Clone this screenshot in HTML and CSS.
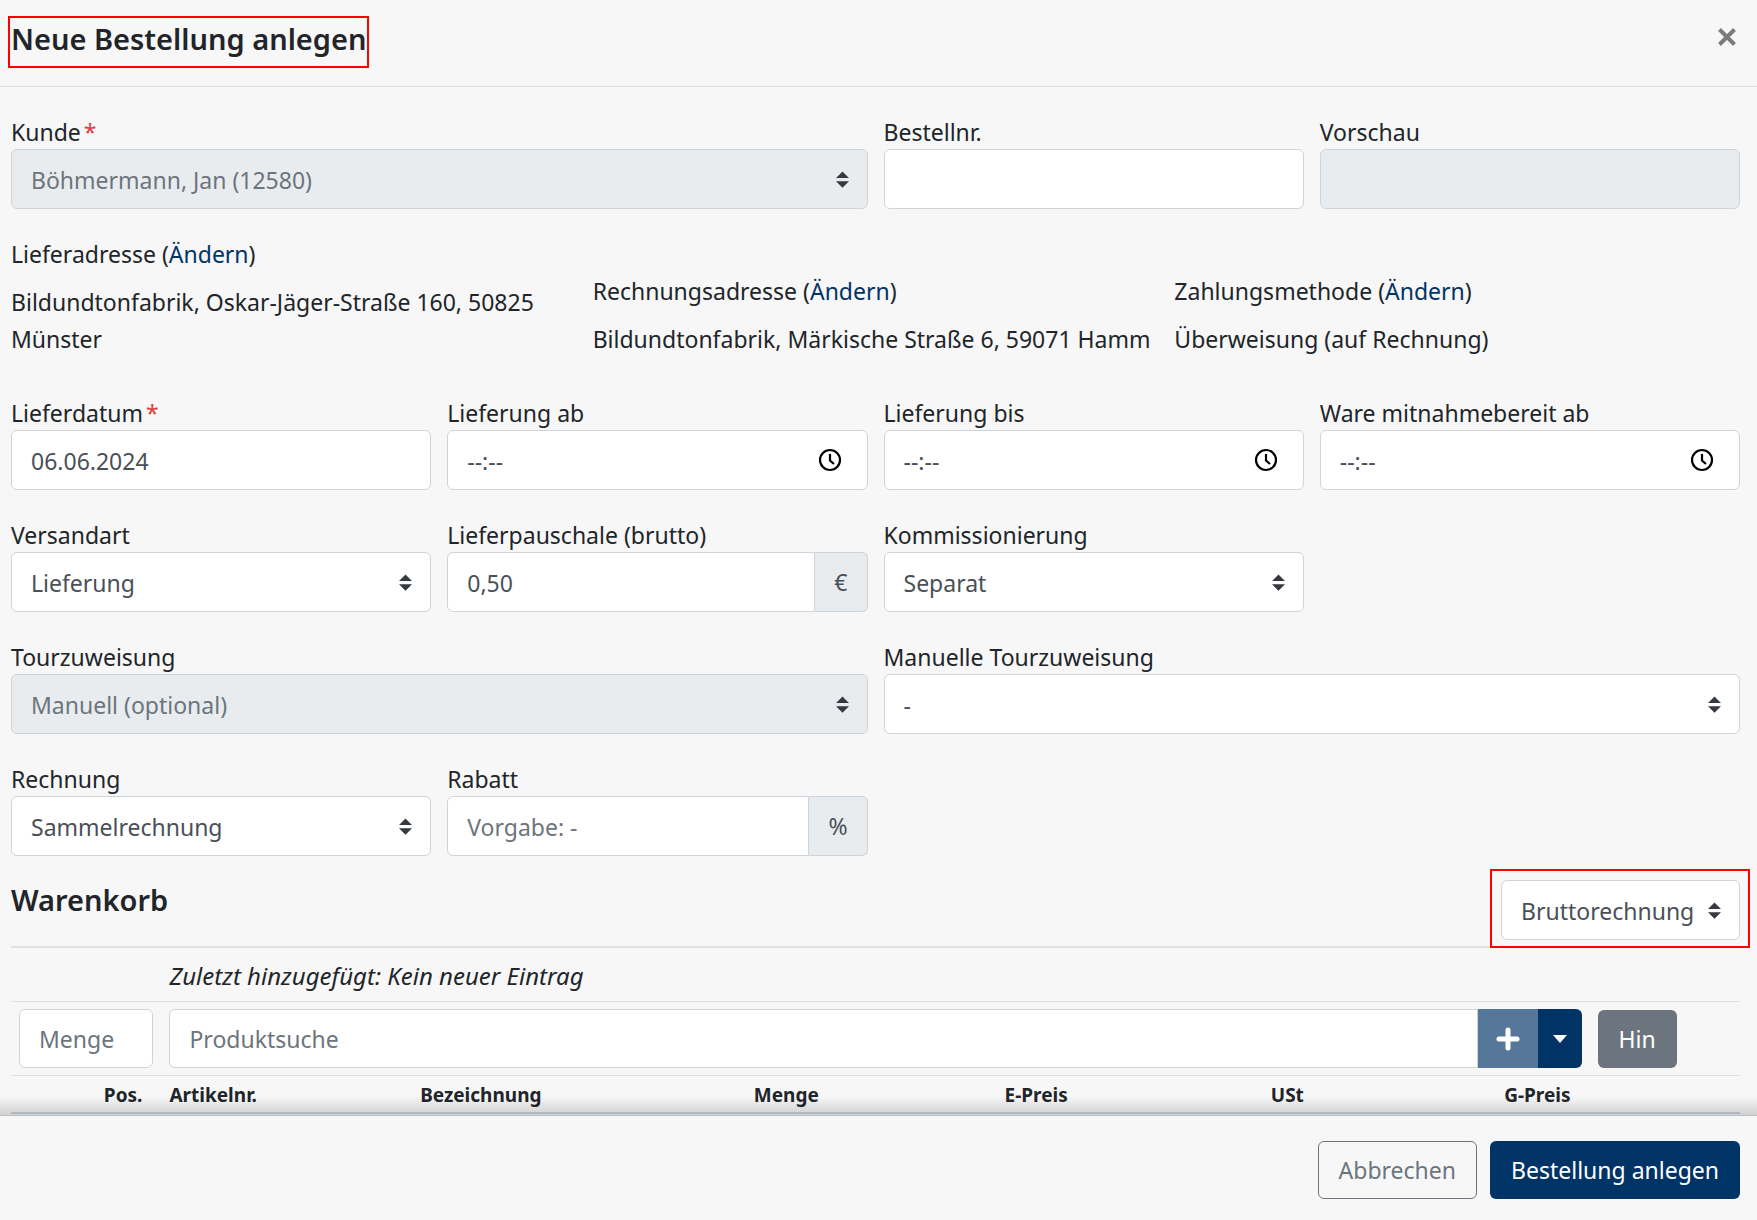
FILE: index.html
```html
<!DOCTYPE html>
<html lang="de">
<head>
<meta charset="utf-8">
<meta name="viewport" content="width=device-width, initial-scale=1">
<title>Neue Bestellung anlegen</title>
<link rel="stylesheet" href="styles.css">
</head>
<body>
<form class="dialog">
  <header class="dialog-header">
    <h1 class="dialog-title marked-title">Neue Bestellung anlegen</h1>
    <button type="button" class="close" aria-label="Schließen">
      <svg viewBox="0 0 18 18" width="18" height="18" aria-hidden="true"><path d="M1.500 1.500l15 15M16.500 1.500l-15 15" stroke="currentColor" stroke-width="4"/></svg>
    </button>
  </header>

  <main class="dialog-body">
    <div class="row">
      <div class="field wide">
        <label for="kunde">Kunde<span class="required">*</span></label>
        <select id="kunde" class="control" disabled><option>Böhmermann, Jan (12580)</option></select>
      </div>
      <div class="field">
        <label for="bestellnr">Bestellnr.</label>
        <input id="bestellnr" class="control" type="text">
      </div>
      <div class="field">
        <label for="vorschau">Vorschau</label>
        <input id="vorschau" class="control" type="text" disabled>
      </div>
    </div>

    <div class="addresses">
      <div class="address">
        <p>Lieferadresse (<a href="#lieferadresse">Ändern</a>)</p>
        <p>Bildundtonfabrik, Oskar-Jäger-Straße 160, 50825 Münster</p>
      </div>
      <div class="address">
        <p>Rechnungsadresse (<a href="#rechnungsadresse">Ändern</a>)</p>
        <p>Bildundtonfabrik, Märkische Straße 6, 59071 Hamm</p>
      </div>
      <div class="address">
        <p>Zahlungsmethode (<a href="#zahlungsmethode">Ändern</a>)</p>
        <p>Überweisung (auf Rechnung)</p>
      </div>
    </div>

    <div class="row">
      <div class="field">
        <label for="lieferdatum">Lieferdatum<span class="required">*</span></label>
        <input id="lieferdatum" class="control" type="text" value="06.06.2024">
      </div>
      <div class="field">
        <label for="ab">Lieferung ab</label>
        <input id="ab" class="control time" type="text" value="--:--">
      </div>
      <div class="field">
        <label for="bis">Lieferung bis</label>
        <input id="bis" class="control time" type="text" value="--:--">
      </div>
      <div class="field">
        <label for="mitnahme">Ware mitnahmebereit ab</label>
        <input id="mitnahme" class="control time" type="text" value="--:--">
      </div>
    </div>

    <div class="row">
      <div class="field">
        <label for="versandart">Versandart</label>
        <select id="versandart" class="control"><option>Lieferung</option></select>
      </div>
      <div class="field">
        <label for="pauschale">Lieferpauschale (brutto)</label>
        <div class="group">
          <input id="pauschale" class="control" type="text" value="0,50">
          <span class="addon">€</span>
        </div>
      </div>
      <div class="field">
        <label for="kommissionierung">Kommissionierung</label>
        <select id="kommissionierung" class="control"><option>Separat</option></select>
      </div>
    </div>

    <div class="row">
      <div class="field wide">
        <label for="tour">Tourzuweisung</label>
        <select id="tour" class="control" disabled><option>Manuell (optional)</option></select>
      </div>
      <div class="field wide">
        <label for="manuell">Manuelle Tourzuweisung</label>
        <select id="manuell" class="control"><option>-</option></select>
      </div>
    </div>

    <div class="row row-last">
      <div class="field">
        <label for="rechnung">Rechnung</label>
        <select id="rechnung" class="control"><option>Sammelrechnung</option></select>
      </div>
      <div class="field">
        <label for="rabatt">Rabatt</label>
        <div class="group">
          <input id="rabatt" class="control" type="text" placeholder="Vorgabe: -">
          <span class="addon">%</span>
        </div>
      </div>
    </div>

    <div class="cart-head">
      <h2>Warenkorb</h2>
      <div class="marked-select">
        <select class="control" aria-label="Rechnungsart"><option>Bruttorechnung</option></select>
      </div>
    </div>

    <table class="cart">
      <colgroup>
        <col class="c-pos"><col class="c-artikel"><col class="c-bezeichnung"><col class="c-menge"><col class="c-epreis"><col class="c-ust"><col class="c-gpreis"><col class="c-aktion">
      </colgroup>
      <tbody>
        <tr class="latest">
          <td></td>
          <td colspan="7">Zuletzt hinzugefügt: Kein neuer Eintrag</td>
        </tr>
        <tr class="entry">
          <td><input class="control" type="text" placeholder="Menge" aria-label="Menge"></td>
          <td colspan="6">
            <div class="group">
              <input class="control" type="text" placeholder="Produktsuche" aria-label="Produktsuche">
              <button type="button" class="add" aria-label="Hinzufügen" disabled>
                <svg viewBox="0 0 24 24" width="24" height="24" aria-hidden="true"><path d="M12 3v18M3 12h18" stroke="currentColor" stroke-width="5" stroke-linecap="round"/></svg>
              </button>
              <button type="button" class="more" aria-label="Weitere Optionen">
                <svg viewBox="0 0 14 8" width="14" height="8" aria-hidden="true"><path d="M0 0h14L7 8z" fill="currentColor"/></svg>
              </button>
            </div>
          </td>
          <td><button type="button" class="btn btn-gray">Hin</button></td>
        </tr>
        <tr class="columns">
          <th class="right" scope="col">Pos.</th>
          <th scope="col">Artikelnr.</th>
          <th scope="col">Bezeichnung</th>
          <th scope="col">Menge</th>
          <th scope="col">E-Preis</th>
          <th scope="col">USt</th>
          <th scope="col">G-Preis</th>
          <th></th>
        </tr>
      </tbody>
    </table>
  </main>

  <footer class="dialog-footer">
    <button type="button" class="btn btn-outline">Abbrechen</button>
    <button type="submit" class="btn btn-primary">Bestellung anlegen</button>
  </footer>
</form>
</body>
</html>
```
FILE: styles.css
```css
* {
  box-sizing: border-box;
}

body {
  margin: 0;
  background: #f7f7f7;
  color: #212529;
  font: 23px/37px "Segoe UI", "Noto Sans", "Open Sans", sans-serif;
}

h1, h2, p {
  margin: 0;
}

input, select, button {
  font: inherit;
}

a {
  color: #003366;
  text-decoration: none;
}

.dialog {
  display: flex;
  flex-direction: column;
  min-height: 100vh;
}

.dialog-header {
  display: flex;
  justify-content: space-between;
  align-items: flex-start;
  height: 87px;
  padding: 16px 21px 0 8px;
  border-bottom: 1px solid #dee2e6;
}

.dialog-title {
  font-size: 29px;
  font-weight: 600;
  line-height: 40px;
}

.marked-title {
  height: 52px;
  padding: 1px 1px 0;
  border: 2px solid #ff0000;
}

.close {
  display: flex;
  margin-top: 12px;
  padding: 0;
  border: 0;
  background: none;
  color: #7b7b7b;
}

.dialog-body {
  flex: 1;
  padding: 25px 17px 0 11px;
}

.row {
  display: grid;
  grid-template-columns: repeat(4, 1fr);
  gap: 16px;
  margin-bottom: 25px;
}

.row-last {
  margin-bottom: 24px;
}

.field {
  display: flex;
  flex-direction: column;
  min-width: 0;
}

.field label {
  padding-top: 3px;
  line-height: 34px;
}

.wide {
  grid-column: span 2;
}

.required {
  margin-left: 3px;
  color: #dc3d3d;
}

.control {
  width: 100%;
  height: 60px;
  padding: 1px 19px 0;
  border: 1px solid #ced4da;
  border-radius: 6px;
  background-color: #fff;
  color: #495057;
}

.control::placeholder {
  color: #6c757d;
  opacity: 1;
}

.control:disabled {
  background-color: #e9ecef;
  color: #6c757d;
  opacity: 1;
}

select.control {
  padding-top: 2px;
  appearance: none;
  background-image: url("data:image/svg+xml,%3Csvg xmlns='http://www.w3.org/2000/svg' viewBox='0 0 4 5'%3E%3Cpath fill='%23343a40' d='M2 0L0 2h4zm0 5L0 3h4z'/%3E%3C/svg%3E");
  background-repeat: no-repeat;
  background-position: right 18px center;
  background-size: 13px 17px;
}

.time {
  background-image: url("data:image/svg+xml,%3Csvg xmlns='http://www.w3.org/2000/svg' viewBox='0 0 24 24' fill='none' stroke='%23000' stroke-width='2.2'%3E%3Ccircle cx='12' cy='12' r='10'/%3E%3Cpath d='M12 6v6.500l4 3.500'/%3E%3C/svg%3E");
  background-repeat: no-repeat;
  background-position: right 25px center;
  background-size: 24px 24px;
}

.group {
  display: flex;
}

.group .control {
  flex: 1;
  min-width: 0;
  border-top-right-radius: 0;
  border-bottom-right-radius: 0;
}

.addon {
  display: flex;
  align-items: center;
  padding: 1px 19px 0;
  border: 1px solid #ced4da;
  border-left: 0;
  border-radius: 0 6px 6px 0;
  background: #e9ecef;
  color: #495057;
}

.addresses {
  display: grid;
  grid-template-columns: repeat(3, 1fr);
  align-items: end;
  gap: 16px;
  padding-top: 2px;
  margin-bottom: 35px;
}

.address {
  display: grid;
  gap: 11px;
}

.cart-head {
  display: flex;
  justify-content: space-between;
  align-items: flex-start;
  height: 66px;
}

.cart-head h2 {
  font-size: 29px;
  font-weight: 600;
  line-height: 40px;
}

.marked-select {
  position: relative;
  width: 239px;
}

.marked-select::after {
  content: "";
  position: absolute;
  inset: -11px -10px -8px -11px;
  border: 2px solid #ff0000;
  pointer-events: none;
}

.cart {
  width: 100%;
  table-layout: fixed;
  border-spacing: 0;
  border-top: 2px solid #dee2e6;
  border-bottom: 2px solid #ced4da;
}

.c-pos { width: 8.7%; }
.c-artikel { width: 14.5%; }
.c-bezeichnung { width: 19.3%; }
.c-menge { width: 14.5%; }
.c-epreis { width: 15.4%; }
.c-ust { width: 13.5%; }
.c-gpreis { width: 5.4%; }
.c-aktion { width: 8.7%; }

.cart td, .cart th {
  padding: 7px 8px;
}

.cart .control {
  height: 59px;
}

.cart .latest td {
  height: 54px;
  padding: 9px 8px 7px;
  border-bottom: 1px solid #dee2e6;
  font-size: 24px;
  font-style: italic;
}

.entry td {
  border-bottom: 1px solid #dee2e6;
}

.cart .columns th {
  height: 36px;
  padding: 2px 8px 0;
  font-size: 19px;
  font-weight: 700;
  line-height: 34px;
  text-align: left;
  white-space: nowrap;
}

.cart .columns .right {
  padding-right: 19px;
  text-align: right;
}

.add, .more {
  display: flex;
  align-items: center;
  justify-content: center;
  padding: 0;
  border: 0;
  background: #003366;
  color: #fff;
}

.add {
  width: 60px;
  background: #557799;
}

.more {
  width: 44px;
  border-radius: 0 6px 6px 0;
}

.btn {
  height: 58px;
  padding: 1px 20px 0;
  border: 1px solid transparent;
  border-radius: 6px;
  color: #fff;
  white-space: nowrap;
}

.btn-gray {
  background: #6c757d;
}

.btn-outline {
  border-color: #6c757d;
  background: transparent;
  color: #6c757d;
}

.btn-primary {
  background: #003366;
}

.dialog-footer {
  position: sticky;
  bottom: 0;
  display: flex;
  justify-content: flex-end;
  gap: 13px;
  padding: 25px 17px 21px;
  border-top: 1px solid #dee2e6;
  background: #f7f7f7;
}

.dialog-footer::before {
  content: "";
  position: absolute;
  right: 0;
  bottom: 100%;
  left: 0;
  height: 20px;
  background: linear-gradient(rgba(0, 0, 0, 0), rgba(0, 0, 0, 0.16));
}
```
